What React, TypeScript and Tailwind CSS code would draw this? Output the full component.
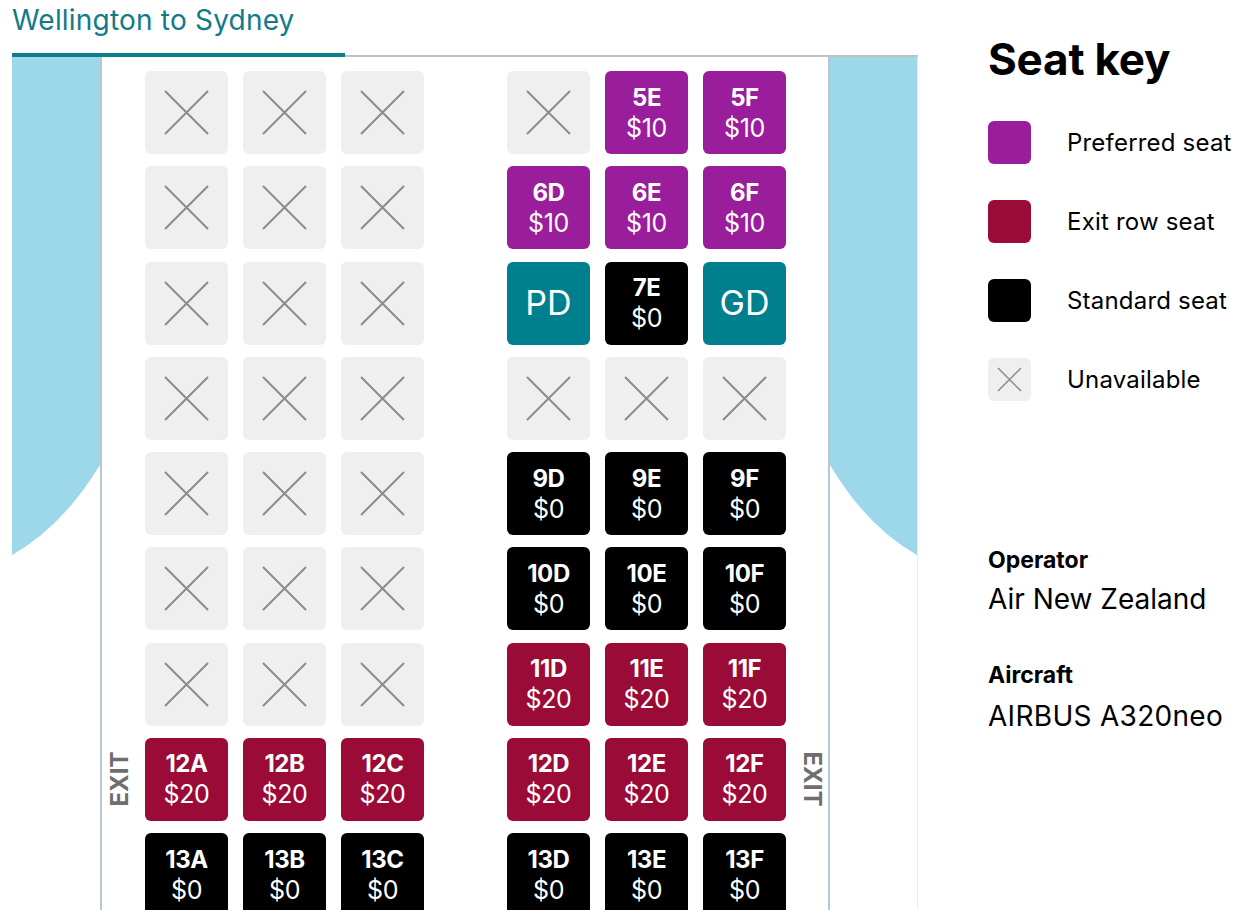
import React from "react";

type SeatKind = "x" | "p" | "e" | "s" | "g";
type Seat = { kind: SeatKind; id?: string; price?: string };

const x: Seat = { kind: "x" };
const seat = (kind: SeatKind, id: string, price = ""): Seat => ({ kind, id, price });

// rows of the cabin, left block A-C then right block D-F
const rows: { seats: Seat[]; exit?: boolean }[] = [
  { seats: [x, x, x, x, seat("p", "5E", "$10"), seat("p", "5F", "$10")] },
  { seats: [x, x, x, seat("p", "6D", "$10"), seat("p", "6E", "$10"), seat("p", "6F", "$10")] },
  { seats: [x, x, x, seat("g", "PD"), seat("s", "7E", "$0"), seat("g", "GD")] },
  { seats: [x, x, x, x, x, x] },
  { seats: [x, x, x, seat("s", "9D", "$0"), seat("s", "9E", "$0"), seat("s", "9F", "$0")] },
  { seats: [x, x, x, seat("s", "10D", "$0"), seat("s", "10E", "$0"), seat("s", "10F", "$0")] },
  { seats: [x, x, x, seat("e", "11D", "$20"), seat("e", "11E", "$20"), seat("e", "11F", "$20")] },
  {
    exit: true,
    seats: [
      seat("e", "12A", "$20"),
      seat("e", "12B", "$20"),
      seat("e", "12C", "$20"),
      seat("e", "12D", "$20"),
      seat("e", "12E", "$20"),
      seat("e", "12F", "$20"),
    ],
  },
  {
    seats: [
      seat("s", "13A", "$0"),
      seat("s", "13B", "$0"),
      seat("s", "13C", "$0"),
      seat("s", "13D", "$0"),
      seat("s", "13E", "$0"),
      seat("s", "13F", "$0"),
    ],
  },
];

function Cross({ size, from, to, width }: { size: number; from: number; to: number; width: number }) {
  return (
    <svg width={size} height={size} viewBox={`0 0 ${size} ${size}`}>
      <path d={`M${from} ${from} L${to} ${to} M${to} ${from} L${from} ${to}`} stroke="#8c8c8c" strokeWidth={width} />
    </svg>
  );
}

function SeatBox({ s }: { s: Seat }) {
  if (s.kind === "x") {
    return (
      <div className="w-[83px] h-[83px] rounded-[6px] bg-[#efefef]">
        <Cross size={83} from={20} to={63} width={2} />
      </div>
    );
  }
  if (s.kind === "g") {
    return (
      <div className="w-[83px] h-[83px] rounded-[6px] bg-[#00808e] flex items-center justify-center text-white text-[34px] leading-none">
        {s.id}
      </div>
    );
  }
  const bg = s.kind === "p" ? "bg-[#9a1d9b]" : s.kind === "e" ? "bg-[#9b0b37]" : "bg-black";
  return (
    <div className={`w-[83px] h-[83px] rounded-[6px] ${bg} flex flex-col items-center justify-center text-white`}>
      <span className="text-[24px] font-bold leading-[31px] tracking-[-0.4px]">{s.id}</span>
      <span className="text-[25px] leading-[31px] tracking-[-0.3px]">{s.price}</span>
    </div>
  );
}

function SeatRow({ seats, exit }: { seats: Seat[]; exit?: boolean }) {
  return (
    <div className="flex h-[83px] shrink-0">
      <div className="w-[43px] flex items-center justify-center">
        {exit && (
          <span className="-translate-x-[4px] -rotate-90 whitespace-nowrap text-[24px] font-bold leading-none text-[#6e6e6e]">
            EXIT
          </span>
        )}
      </div>
      <div className="grid grid-cols-[83px_83px_83px_53px_83px_83px_83px] gap-x-[15px]">
        <SeatBox s={seats[0]} />
        <SeatBox s={seats[1]} />
        <SeatBox s={seats[2]} />
        <div />
        <SeatBox s={seats[3]} />
        <SeatBox s={seats[4]} />
        <SeatBox s={seats[5]} />
      </div>
      <div className="w-[42px] flex items-center justify-center">
        {exit && (
          <span className="translate-x-[5px] rotate-90 whitespace-nowrap text-[24px] font-bold leading-none text-[#6e6e6e]">
            EXIT
          </span>
        )}
      </div>
    </div>
  );
}

function LegendItem({ color, label, unavailable }: { color: string; label: string; unavailable?: boolean }) {
  return (
    <div className="flex items-center h-[43px]">
      <div className={`w-[43px] h-[43px] rounded-[6px] ${color} flex items-center justify-center`}>
        {unavailable && <Cross size={43} from={10} to={33} width={1.5} />}
      </div>
      <span className="ml-[36px] text-[24px] tracking-[0.2px] leading-none text-black">{label}</span>
    </div>
  );
}

export default function App() {
  return (
    <div className="h-[910px] overflow-hidden bg-white flex font-['Inter','Liberation_Sans',sans-serif]">
      {/* seat map */}
      <div className="ml-[12px] w-[906px] flex flex-col">
        <div className="pt-[2px] text-[28px] leading-[36px] tracking-[0.2px] text-[#127b86]">Wellington to Sydney</div>
        <div className="mt-[15px] flex items-end">
          <div className="w-[333px] h-[4px] bg-[#0d7f8a]" />
          <div className="flex-1 h-[2px] bg-[#c2c2c2]" />
        </div>
        <div className="flex flex-1">
          <div className="w-[88px]">
            <svg width="88" height="498" viewBox="0 0 88 498">
              <path d="M0 0 H88 V408 Q50 470 0 498 Z" fill="#9cd8ea" />
            </svg>
          </div>
          <div className="w-[730px] border-x-2 border-[#b3c8d1] pt-[14px] flex flex-col gap-y-[12.25px]">
            {rows.map((r, i) => (
              <SeatRow key={i} seats={r.seats} exit={r.exit} />
            ))}
          </div>
          <div className="w-[88px] border-r border-[#e6ecef]">
            <svg width="87" height="498" viewBox="0 0 87 498">
              <path d="M0 0 H87 V498 Q37 470 0 408 Z" fill="#9cd8ea" />
            </svg>
          </div>
        </div>
      </div>

      {/* seat key and flight info */}
      <div className="ml-[70px] pt-[37px] flex flex-col">
        <h2 className="text-[44px] font-bold leading-none text-black tracking-[-0.2px]">Seat key</h2>
        <div className="mt-[40px] flex flex-col gap-y-[36px]">
          <LegendItem color="bg-[#9a1d9b]" label="Preferred seat" />
          <LegendItem color="bg-[#9b0b37]" label="Exit row seat" />
          <LegendItem color="bg-black" label="Standard seat" />
          <LegendItem color="bg-[#efefef]" label="Unavailable" unavailable />
        </div>
        <div className="mt-[145px] flex flex-col">
          <span className="text-[23px] font-bold leading-[28px] text-black">Operator</span>
          <span className="mt-[8px] text-[28px] leading-[34px] text-black">Air New Zealand</span>
          <span className="mt-[45px] text-[23px] font-bold leading-[28px] text-black">Aircraft</span>
          <span className="mt-[10px] text-[28px] leading-[34px] tracking-[0.3px] text-black">AIRBUS A320neo</span>
        </div>
      </div>
    </div>
  );
}
